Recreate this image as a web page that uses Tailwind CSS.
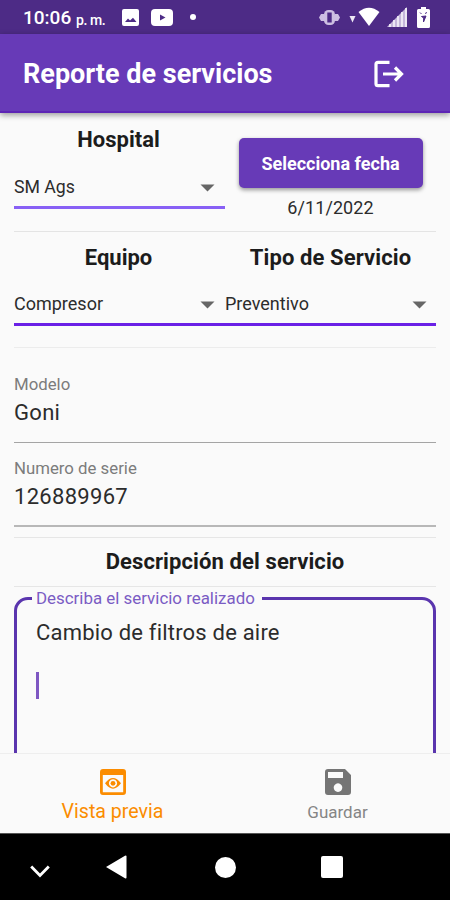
<!DOCTYPE html>
<html lang="es">
<head>
<meta charset="utf-8">
<title>Reporte de servicios</title>
<script src="https://cdn.jsdelivr.net/npm/@tailwindcss/browser@4"></script>
</head>
<body class="w-[450px] h-[900px] overflow-hidden flex flex-col bg-[#fafafa] font-['Roboto',sans-serif] text-[#2c2c2c] whitespace-nowrap">
  <!-- Status bar -->
  <div class="h-[34px] shrink-0 bg-[#4d2b86] flex items-center justify-between pl-[23px] pr-5 text-white">
    <div class="flex items-center">
      <span class="text-[19px] font-medium leading-[34px] w-[53px] pt-0.5">10:06</span>
      <span class="text-[14px] font-medium leading-[34px] w-[46px] pt-[5px] tracking-[-0.4px]">p. m.</span>
      <svg class="w-[17px] h-[17px]" viewBox="0 0 17 17"><rect width="17" height="17" rx="2" fill="#fff"/><path d="M3 13l3-3.500 2 2 3-2.700 3.500 4.200z" fill="#4d2b86"/></svg>
      <svg class="w-[22px] h-[17px] ml-3" viewBox="0 0 22 17"><rect width="22" height="17" rx="4" fill="#fff"/><path d="M9 5.500l5.500 3-5.500 3z" fill="#4d2b86"/></svg>
      <span class="w-[6px] h-[6px] rounded-full bg-white ml-[17px]"></span>
    </div>
    <div class="flex items-center">
      <svg class="w-[21px] h-[17px] mr-[9px]" viewBox="0 0 21 17"><path d="M0 8.500L2 5H5V12H2zM21 8.500L19 5H16V12H19z" fill="#cdbfe2"/><rect x="5" y="1" width="11" height="15" rx="4.500" fill="#cdbfe2"/><rect x="8.300" y="3.500" width="4.400" height="10" fill="#4d2b86"/></svg>
      <svg class="w-[32px] h-[20px] mr-[6px]" viewBox="0 0 32 20"><path d="M0.500 9h6l-3 6.500z" fill="#eee8f5"/><path d="M9.500 5Q20 -3.500 30.500 5L20 19z" fill="#fff"/></svg>
      <svg class="w-[20px] h-[20px] mr-[10px]" viewBox="0 0 20 20"><path d="M0 20L20 0v20z" fill="#c4b6db"/><path d="M19 1v19M15 5v15M11 9v11M7 13v7M3 17v3" stroke="#f6f3fa" stroke-width="1.600"/></svg>
      <svg class="w-[13px] h-[21px]" viewBox="0 0 13 21"><path d="M4 0h5v2h2.500Q13 2 13 3.500v16Q13 21 11.500 21h-10Q0 21 0 19.500v-16Q0 2 1.500 2H4z" fill="#fff"/><path d="M3 5.500l1.500 1.500M9.500 5L8.500 7M4.500 9.500l4.500-.5L6.500 15l.2-4z" stroke="#4d2b86" stroke-width="1" fill="#4d2b86"/></svg>
    </div>
  </div>

  <!-- App bar -->
  <header class="relative h-[79px] shrink-0 bg-[#673ab7] border-b-2 border-[#5d24b5] shadow-[0_2px_6px_rgba(0,0,0,0.4)] flex items-center justify-between pl-[23px] pr-[46px] text-white">
    <h1 class="text-[27px] font-bold leading-8 pt-0.5">Reporte de servicios</h1>
    <svg class="w-[31px] h-[28px] mt-0.5" viewBox="0 0 31 28" fill="none" stroke="#fff" stroke-width="3.200"><path d="M16.500 2.300H5Q3 2.300 3 4.300V23.700Q3 25.700 5 25.700H16.500" /><path d="M10 14H28M22 7.500L28.500 14L22 20.500"/></svg>
  </header>

  <!-- Form -->
  <main class="h-[640px] shrink-0 overflow-hidden px-[14px]">
    <section class="grid grid-cols-2 h-[119px] border-b border-[#e4e4e4]">
      <div>
        <h2 class="h-[54px] leading-[54px] text-[22px] font-bold text-[#1c1c1c] text-center pl-0 pr-0.5">Hospital</h2>
        <div class="h-[42px] flex items-center justify-between border-b-[3px] border-[#8860f5] pr-[10px]">
          <span class="text-[17.700px] pt-px">SM Ags</span>
          <svg class="w-[15px] h-2 mt-[3px]" viewBox="0 0 15 8"><path d="M0.500 0.500h14L7.500 7.500z" fill="#666"/></svg>
        </div>
      </div>
      <div class="flex flex-col items-center pt-[25px]">
        <button class="w-[184px] h-[50px] rounded-[5px] bg-[#673ab7] text-white text-[18px] font-bold shadow-[0_2px_4px_rgba(0,0,0,0.4)]">Selecciona fecha</button>
        <span class="text-[18px] leading-[39px] tracking-[0.1px]">6/11/2022</span>
      </div>
    </section>

    <section class="grid grid-cols-2 h-[116px] border-b border-[#ececec]">
      <div>
        <h2 class="h-[50px] leading-[51px] text-[22px] font-bold text-[#1c1c1c] text-center pr-0.5">Equipo</h2>
        <div class="h-[44px] flex items-center justify-between border-b-[3px] border-[#6a20e6] pr-[10px]">
          <span class="text-[18px] pt-0.5">Compresor</span>
          <svg class="w-[15px] h-2 mt-[4px]" viewBox="0 0 15 8"><path d="M0.500 0.500h14L7.500 7.500z" fill="#666"/></svg>
        </div>
      </div>
      <div>
        <h2 class="h-[50px] leading-[51px] text-[22px] tracking-[0.1px] font-bold text-[#1c1c1c] text-center">Tipo de Servicio</h2>
        <div class="h-[44px] flex items-center justify-between border-b-[3px] border-[#6a20e6] pr-[9px]">
          <span class="text-[18px] pt-0.5">Preventivo</span>
          <svg class="w-[15px] h-2 mt-[4px]" viewBox="0 0 15 8"><path d="M0.500 0.500h14L7.500 7.500z" fill="#666"/></svg>
        </div>
      </div>
    </section>

    <label class="flex flex-col h-[95px] pt-[24px] border-b-[1.500px] border-[#a4a4a4]">
      <span class="text-[16.800px] leading-6 text-[#7c7c7c]">Modelo</span>
      <span class="text-[22px] tracking-[0.3px] leading-[34px]">Goni</span>
    </label>
    <label class="flex flex-col h-[84px] pt-[13px] border-b-2 border-[#b8b8b8]">
      <span class="text-[16.800px] leading-6 text-[#7c7c7c]">Numero de serie</span>
      <span class="text-[22px] tracking-[0.3px] leading-[33px]">126889967</span>
    </label>
    <div class="h-[11px] border-b border-[#e6e6e6]"></div>
    <h2 class="h-[49px] leading-[48px] text-[22px] tracking-[0.1px] font-bold text-[#1c1c1c] text-center border-b border-[#e6e6e6]">Descripción del servicio</h2>
    <fieldset class="mt-px h-[220px] rounded-[14px] border-[3px] border-[#5a35ae] pl-[19px]">
      <legend class="ml-[-4px] px-[4px] text-[16.900px] leading-[20px] text-[#7a5cc4]"><span class="pr-[3px]">Describa el servicio realizado</span></legend>
      <p class="text-[22px] tracking-[0.2px] leading-[49px]">Cambio de filtros de aire</p>
      <div class="w-[3px] h-[27px] mt-[15px] bg-[#7e57c2]"></div>
    </fieldset>
  </main>

  <!-- Bottom navigation -->
  <nav class="relative h-[80px] shrink-0 bg-[#fafafa] border-t border-[#eeeeee] grid grid-cols-2">
    <div class="flex flex-col items-center pt-[15px] text-[#fb8c00]">
      <svg class="w-[26px] h-[26px]" viewBox="0 0 26 26"><path fill="currentColor" fill-rule="evenodd" d="M3 0H23Q26 0 26 3V23Q26 26 23 26H3Q0 26 0 23V3Q0 0 3 0zM2.800 6V23.200H23.200V6z"/><path fill="currentColor" fill-rule="evenodd" d="M5 14.300Q13 3.500 21 14.300Q13 25 5 14.300zM13 10.200a4.100 4.100 0 1 0 .01 0z"/><circle cx="13" cy="14.300" r="2.400" fill="currentColor"/></svg>
      <span class="text-[19.600px] leading-6 mt-[5px]">Vista previa</span>
    </div>
    <div class="flex flex-col items-center pt-[15px] text-[#757575]">
      <svg class="w-[26px] h-[26px]" viewBox="0 0 26 26"><path fill="currentColor" fill-rule="evenodd" d="M3 0H20L26 6V23Q26 26 23 26H3Q0 26 0 23V3Q0 0 3 0zM3 3V9H18V3zM13 14.300a4.300 4.300 0 1 0 .01 0z"/></svg>
      <span class="text-[17px] leading-6 mt-[5px] text-[#858585]">Guardar</span>
    </div>
  </nav>

  <!-- System navigation -->
  <div class="h-[67px] shrink-0 bg-black border-t border-[#555] flex items-center pl-[30px]">
    <svg class="w-[20px] h-[13px] mt-[8px]" viewBox="0 0 20 13"><path d="M1.200 1.500L10 10.500L18.800 1.500" fill="none" stroke="#fff" stroke-width="2.800"/></svg>
    <svg class="w-[21px] h-[24px] ml-[56px]" viewBox="0 0 21 24"><path d="M0 12L19 .7Q20.500 0 20.500 1.500V22.500Q20.500 24 19 23.300z" fill="#fff"/></svg>
    <span class="w-[21px] h-[21px] rounded-full bg-white ml-[88px]"></span>
    <span class="w-[22px] h-[22px] rounded-[2px] bg-white ml-[85px]"></span>
  </div>
</body>
</html>
